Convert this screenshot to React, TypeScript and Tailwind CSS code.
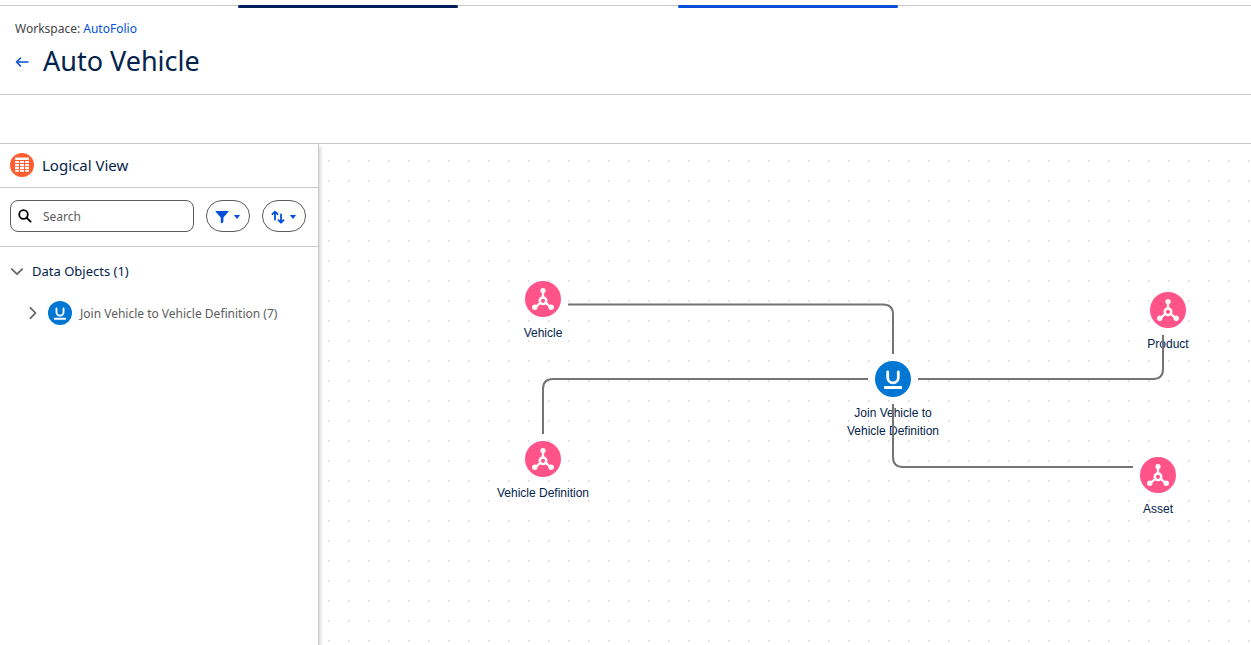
import type { ReactNode } from "react";

type NodeKind = "object" | "join";

interface GraphNode {
  id: string;
  label: string;
  kind: NodeKind;
  x: number;
  y: number;
}

const nodes: GraphNode[] = [
  { id: "vehicle", label: "Vehicle", kind: "object", x: 224, y: 155 },
  { id: "definition", label: "Vehicle Definition", kind: "object", x: 224, y: 315 },
  { id: "join", label: "Join Vehicle to Vehicle Definition", kind: "join", x: 574, y: 235 },
  { id: "product", label: "Product", kind: "object", x: 849, y: 166 },
  { id: "asset", label: "Asset", kind: "object", x: 839, y: 331 },
];

const edges = [
  "M249 160.5H564Q574 160.5 574 170.5V210",
  "M224 290V245Q224 235 234 235H549",
  "M599 235H834Q844 235 844 225V191",
  "M574 260V313Q574 323 584 323H814",
];

function JoinIcon({ className }: { className: string }) {
  return (
    <svg viewBox="0 0 36 36" className={className} aria-hidden="true">
      <circle cx="18" cy="18" r="18" fill="#0176d3" />
      <path d="M12.7 11v5.6a5.3 5.3 0 0 0 10.6 0V11" fill="none" stroke="#fff" strokeWidth="2.8" strokeLinecap="round" />
      <rect x="9" y="25" width="18" height="3" rx="0.8" fill="#fff" />
    </svg>
  );
}

function ObjectIcon({ className }: { className: string }) {
  return (
    <svg viewBox="0 0 36 36" className={className} aria-hidden="true">
      <circle cx="18" cy="18" r="18" fill="#ff538a" />
      <path d="M18 10v7M15.5 21.7L10.5 26M20.5 21.7L25.5 26" stroke="#fff" strokeWidth="2.3" />
      <circle cx="18" cy="19.8" r="3.3" fill="none" stroke="#fff" strokeWidth="2.4" />
      <circle cx="18" cy="9.6" r="2.6" fill="#fff" />
      <circle cx="9.8" cy="26.2" r="2.7" fill="#fff" />
      <circle cx="26.2" cy="26.2" r="2.7" fill="#fff" />
    </svg>
  );
}

function TableIcon() {
  return (
    <svg viewBox="0 0 24 24" className="size-6" aria-hidden="true">
      <circle cx="12" cy="12" r="12" fill="#ff5d2d" />
      <g fill="#fff">
        <rect x="5" y="4.5" width="14" height="2.5" rx="0.8" />
        {[5, 10, 15].map((x) =>
          [8, 10.9, 13.8, 16.7].map((y) => <rect key={`${x}-${y}`} x={x} y={y} width="4" height="2.1" rx="0.3" />)
        )}
      </g>
    </svg>
  );
}

function Caret() {
  return (
    <svg viewBox="0 0 6 4" className="h-1 w-1.5" aria-hidden="true">
      <path d="M0.5 0H5.5Q6.2 0 5.8 0.6L3.4 3.6Q3 4 2.6 3.6L0.2 0.6Q-0.2 0 0.5 0Z" fill="#0250d9" />
    </svg>
  );
}

function PillButton({ label, children }: { label: string; children: ReactNode }) {
  return (
    <button
      type="button"
      aria-label={label}
      className="flex h-8 w-11 shrink-0 items-center gap-1 rounded-full border border-[#5c5c5c] bg-white pt-px pl-[7px]"
    >
      {children}
      <Caret />
    </button>
  );
}

function Chevron({ open }: { open: boolean }) {
  return (
    <svg viewBox="0 0 14 14" className="size-3.5 shrink-0" aria-hidden="true">
      <path
        d={open ? "M1.8 4.2L7 9.2L12.2 4.2" : "M4.5 1.8L9.5 7L4.5 12.2"}
        fill="none"
        stroke="#666"
        strokeWidth="1.8"
        strokeLinecap="round"
        strokeLinejoin="round"
      />
    </svg>
  );
}

function Sidebar() {
  return (
    <aside className="z-10 flex w-[319px] shrink-0 flex-col border-r border-[#c9c9c9] bg-white shadow-[2px_3px_3px_rgba(0,0,0,0.14)]">
      <div className="flex h-11 items-center gap-2 border-b border-[#c9c9c9] px-2.5 pb-px">
        <TableIcon />
        <h2 className="text-[15px] text-[#03234d]">Logical View</h2>
      </div>
      <div className="flex items-center gap-3 border-b border-[#c9c9c9] px-2.5 pt-3 pb-3.5">
        <label className="flex h-8 w-[184px] items-center gap-[11px] rounded-lg border border-[#5c5c5c] px-[7px]">
          <svg viewBox="0 0 14 14" className="size-3.5 shrink-0" aria-hidden="true">
            <circle cx="5.5" cy="5.5" r="4.3" fill="none" stroke="#000" strokeWidth="1.8" />
            <path d="M8.8 8.8L12.6 12.6" stroke="#000" strokeWidth="1.9" strokeLinecap="round" />
          </svg>
          <input
            type="text"
            aria-label="Search"
            placeholder="Search"
            className="min-w-0 flex-1 bg-transparent pt-px text-[12px] text-[#03234d] outline-none placeholder:text-[#5c5c5c]"
          />
        </label>
        <PillButton label="Filter">
          <svg viewBox="0 0 16 14" className="h-3.5 w-4" aria-hidden="true">
            <path d="M1.8 1H14.2Q15 1 14.4 1.7L9.4 7.6V11.8Q9.4 12.2 9 12.4L7.3 13.2Q6.8 13.3 6.8 12.8V7.6L1.6 1.7Q1.1 1 1.8 1Z" fill="#0250d9" />
          </svg>
        </PillButton>
        <PillButton label="Sort">
          <svg viewBox="0 0 16 14" className="h-3.5 w-4" aria-hidden="true">
            <path
              d="M5 9.6V2M2.4 4.2L5 1.6L7.6 4.2M11 4.4V12.4M8.4 10.1L11 12.7L13.6 10.1"
              fill="none"
              stroke="#0250d9"
              strokeWidth="1.8"
              strokeLinecap="round"
              strokeLinejoin="round"
            />
          </svg>
        </PillButton>
      </div>
      <div className="px-2.5 pt-[13px]">
        <button type="button" aria-expanded="true" className="flex h-6 items-center gap-2 text-[13px] text-[#03234d]">
          <Chevron open />
          Data Objects (1)
        </button>
        <button
          type="button"
          aria-expanded="false"
          className="mt-[15px] ml-4 flex h-7 items-center gap-2 text-[12px] whitespace-nowrap text-[#5c5c5c]"
        >
          <Chevron open={false} />
          <JoinIcon className="size-6" />
          <span className="pt-px">Join Vehicle to Vehicle Definition (7)</span>
        </button>
      </div>
    </aside>
  );
}

function Canvas() {
  return (
    <main className="relative min-w-0 flex-1 overflow-hidden bg-white">
      <svg className="absolute inset-0 size-full" aria-hidden="true">
        <defs>
          <pattern id="dots" x="9" y="16" width="20" height="20" patternUnits="userSpaceOnUse">
            <rect width="1" height="2" fill="#dcdcdc" />
            <rect x="1" width="1" height="2" fill="#f1f1f1" />
          </pattern>
        </defs>
        <rect width="100%" height="100%" fill="url(#dots)" />
      </svg>
      {nodes.map((node) => (
        <div
          key={node.id}
          className="absolute -mt-[18px] -ml-[50px] flex w-[100px] flex-col items-center gap-[7px] text-center font-['Liberation_Sans',Arial,sans-serif] text-[12px] leading-[18px] text-[#03234d]"
          style={{ left: node.x, top: node.y }}
        >
          {node.kind === "join" ? <JoinIcon className="size-9" /> : <ObjectIcon className="size-9" />}
          <span>{node.label}</span>
        </div>
      ))}
      <svg className="pointer-events-none absolute inset-0 size-full" aria-hidden="true">
        {edges.map((d) => (
          <path key={d} d={d} fill="none" stroke="#747474" strokeWidth="2" />
        ))}
      </svg>
    </main>
  );
}

export default function App() {
  return (
    <div className="flex min-h-screen flex-col bg-white font-['Noto_Sans','Open_Sans',sans-serif]">
      <div className="flex h-2 gap-[220px] pt-[5px] pl-[238px] shadow-[inset_0_-2px_#fff,inset_0_-3px_#c9c9c9]">
        <div className="h-[3px] w-[220px] rounded-xs bg-[#001e5b]" />
        <div className="h-[3px] w-[220px] rounded-xs bg-[#0250d9]" />
      </div>
      <header className="h-[87px] border-b border-[#c9c9c9] px-[15px] pt-3">
        <p className="text-[12px] leading-[18px] text-[#444]">
          Workspace:{" "}
          <a href="#autofolio" className="text-[#0250d9]">
            AutoFolio
          </a>
        </p>
        <div className="flex items-center gap-3.5 pt-1.5">
          <a href="#back" aria-label="Back">
            <svg viewBox="0 0 14 14" className="size-3.5" aria-hidden="true">
              <path
                d="M13 8H1.5M5.5 4L1.5 8L5.5 12"
                fill="none"
                stroke="#0250d9"
                strokeWidth="1.6"
                strokeLinecap="round"
                strokeLinejoin="round"
              />
            </svg>
          </a>
          <h1 className="text-[27px] leading-[34px] text-[#03234d]">Auto Vehicle</h1>
        </div>
      </header>
      <div className="h-[49px] border-b border-[#c9c9c9]" />
      <div className="flex flex-1">
        <Sidebar />
        <Canvas />
      </div>
    </div>
  );
}
